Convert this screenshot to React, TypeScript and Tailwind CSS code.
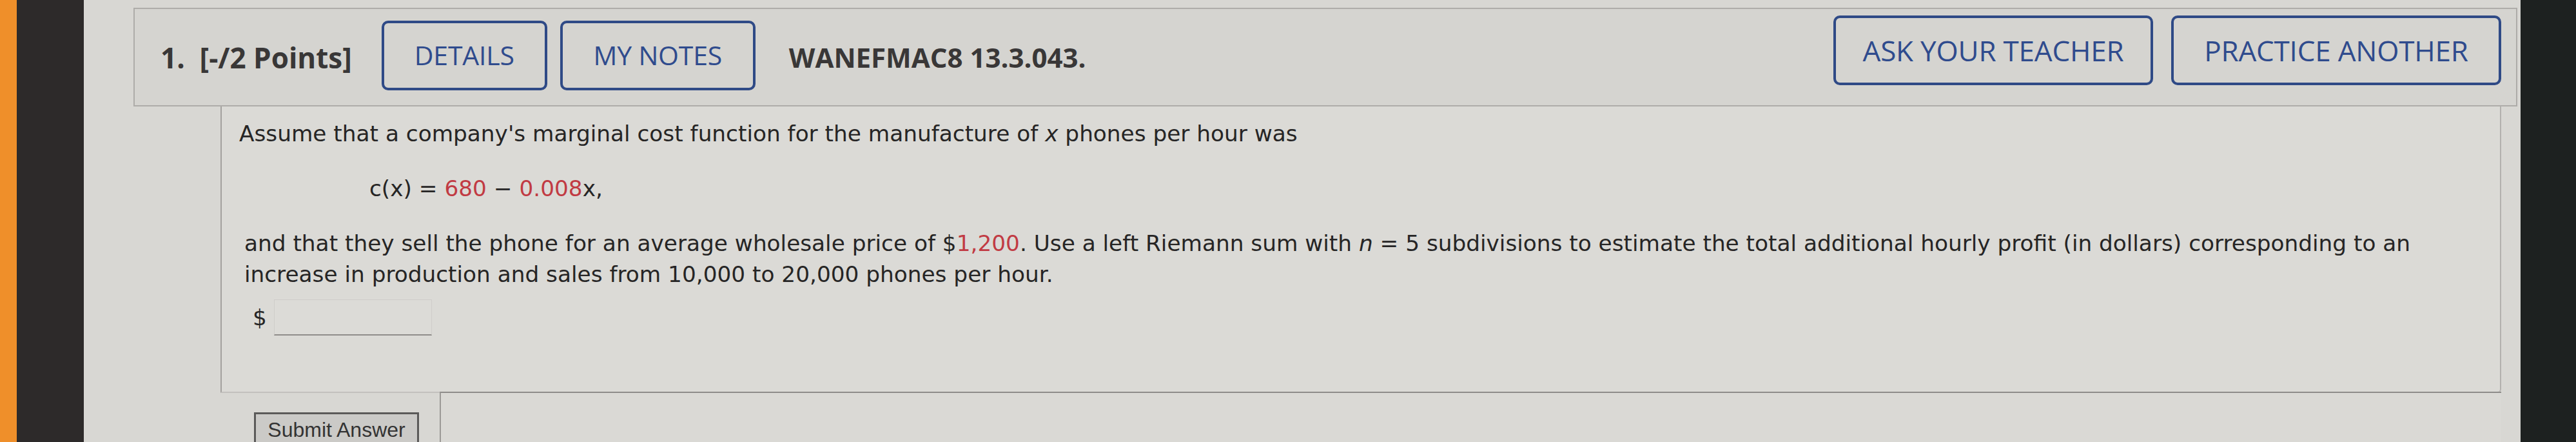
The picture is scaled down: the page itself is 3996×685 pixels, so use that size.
import React from "react";

const headFont = { fontFamily: '"Open Sans", "Noto Sans", sans-serif' };
const bodyFont = { fontFamily: '"DejaVu Sans", Verdana, sans-serif' };

function OutlineBtn({ label, w, size }: { label: string; w: string; size: string }) {
  return (
    <div
      className={`${w} h-[108px] border-[4px] border-[#2f4a86] rounded-[10px] flex items-center justify-center text-[#2f4b8d] ${size} tracking-[-0.2px]`}
      style={headFont}
    >
      {label}
    </div>
  );
}

export default function App() {
  const red = "text-[#c13a43]";
  return (
    <div className="w-[3996px] h-[685px] overflow-hidden flex bg-[#1d2120]">
      <div className="w-[26px] h-full bg-[#ef8f2a]" />
      <div className="w-[104px] h-full bg-[#2d2a2a]" />
      <div className="w-[3780px] h-full bg-[#d8d7d3] pt-[12px]">
        <div className="ml-[77px] mr-[5px]">
          {/* header */}
          <div className="h-[153px] border-2 border-[#aeaca9] bg-[#d5d4d0] flex items-center pl-[40px] pr-[23px]">
            <div className="font-bold text-[44px] text-[#393737] whitespace-nowrap" style={headFont}>
              1.&nbsp; [-/2 Points]
            </div>
            <div className="ml-[46px] flex items-center gap-[20px] mt-[-6px]">
              <OutlineBtn label="DETAILS" w="w-[257px]" size="text-[41px]" />
              <OutlineBtn label="MY NOTES" w="w-[303px]" size="text-[41px]" />
            </div>
            <div className="ml-[52px] font-bold text-[42px] text-[#393737] whitespace-nowrap" style={headFont}>
              WANEFMAC8 13.3.043.
            </div>
            <div className="ml-auto flex items-center gap-[28px] mb-[22px]">
              <OutlineBtn label="ASK YOUR TEACHER" w="w-[496px]" size="text-[44px]" />
              <OutlineBtn label="PRACTICE ANOTHER" w="w-[512px]" size="text-[44px]" />
            </div>
          </div>

          {/* body */}
          <div className="pl-[135px]">
            <div
              className="mr-[25px] border-l-2 border-r-2 border-b-2 border-l-[#a3a19e] border-r-[#b3b1ae] border-b-[#c2c0bd] rounded-br-[6px] bg-[#dbdad6] pt-[18px] pl-[27px] pb-[87px] text-[34.3px] leading-[48px] text-[#262525]"
              style={bodyFont}
            >
              <div className="whitespace-nowrap">
                Assume that a company's marginal cost function for the manufacture of <i>x</i> phones per hour was
              </div>
              <div className="mt-[37px] ml-[202px] whitespace-nowrap">
                c(x) = <span className={red}>680</span> − <span className={red}>0.008</span>x,
              </div>
              <div className="mt-[37px] ml-[8px] whitespace-nowrap">
                and that they sell the phone for an average wholesale price of $<span className={red}>1,200</span>. Use a
                left Riemann sum with <i>n</i> = 5 subdivisions to estimate the total additional hourly profit (in dollars)
                corresponding to an
                <br />
                increase in production and sales from 10,000 to 20,000 phones per hour.
              </div>
              <div className="mt-[15px] ml-[21px] flex items-center">
                <span>$</span>
                <div className="ml-[11px] w-[245px] h-[56px] border border-[#cfcdca] border-b-2 border-b-[#8f8d8a] bg-[#dcdbd7]" />
              </div>
            </div>

            <div className="flex">
              <div
                className="ml-[52px] mt-[30px] w-[256px] h-[60px] border-[3px] border-[#5b5a59] bg-[#cbcac7] flex items-start justify-center pt-[8px] text-[32px] leading-none text-[#333]"
                style={{ fontFamily: '"Liberation Sans", Arial, sans-serif' }}
              >
                Submit Answer
              </div>
              <div className="ml-[32px] mt-[-2px] flex-1 mr-[25px] h-[90px] border-t-2 border-l-2 border-t-[#8e8c8a] border-l-[#9b9996] bg-[#dad9d5]" />
            </div>
          </div>
        </div>
      </div>
    </div>
  );
}
